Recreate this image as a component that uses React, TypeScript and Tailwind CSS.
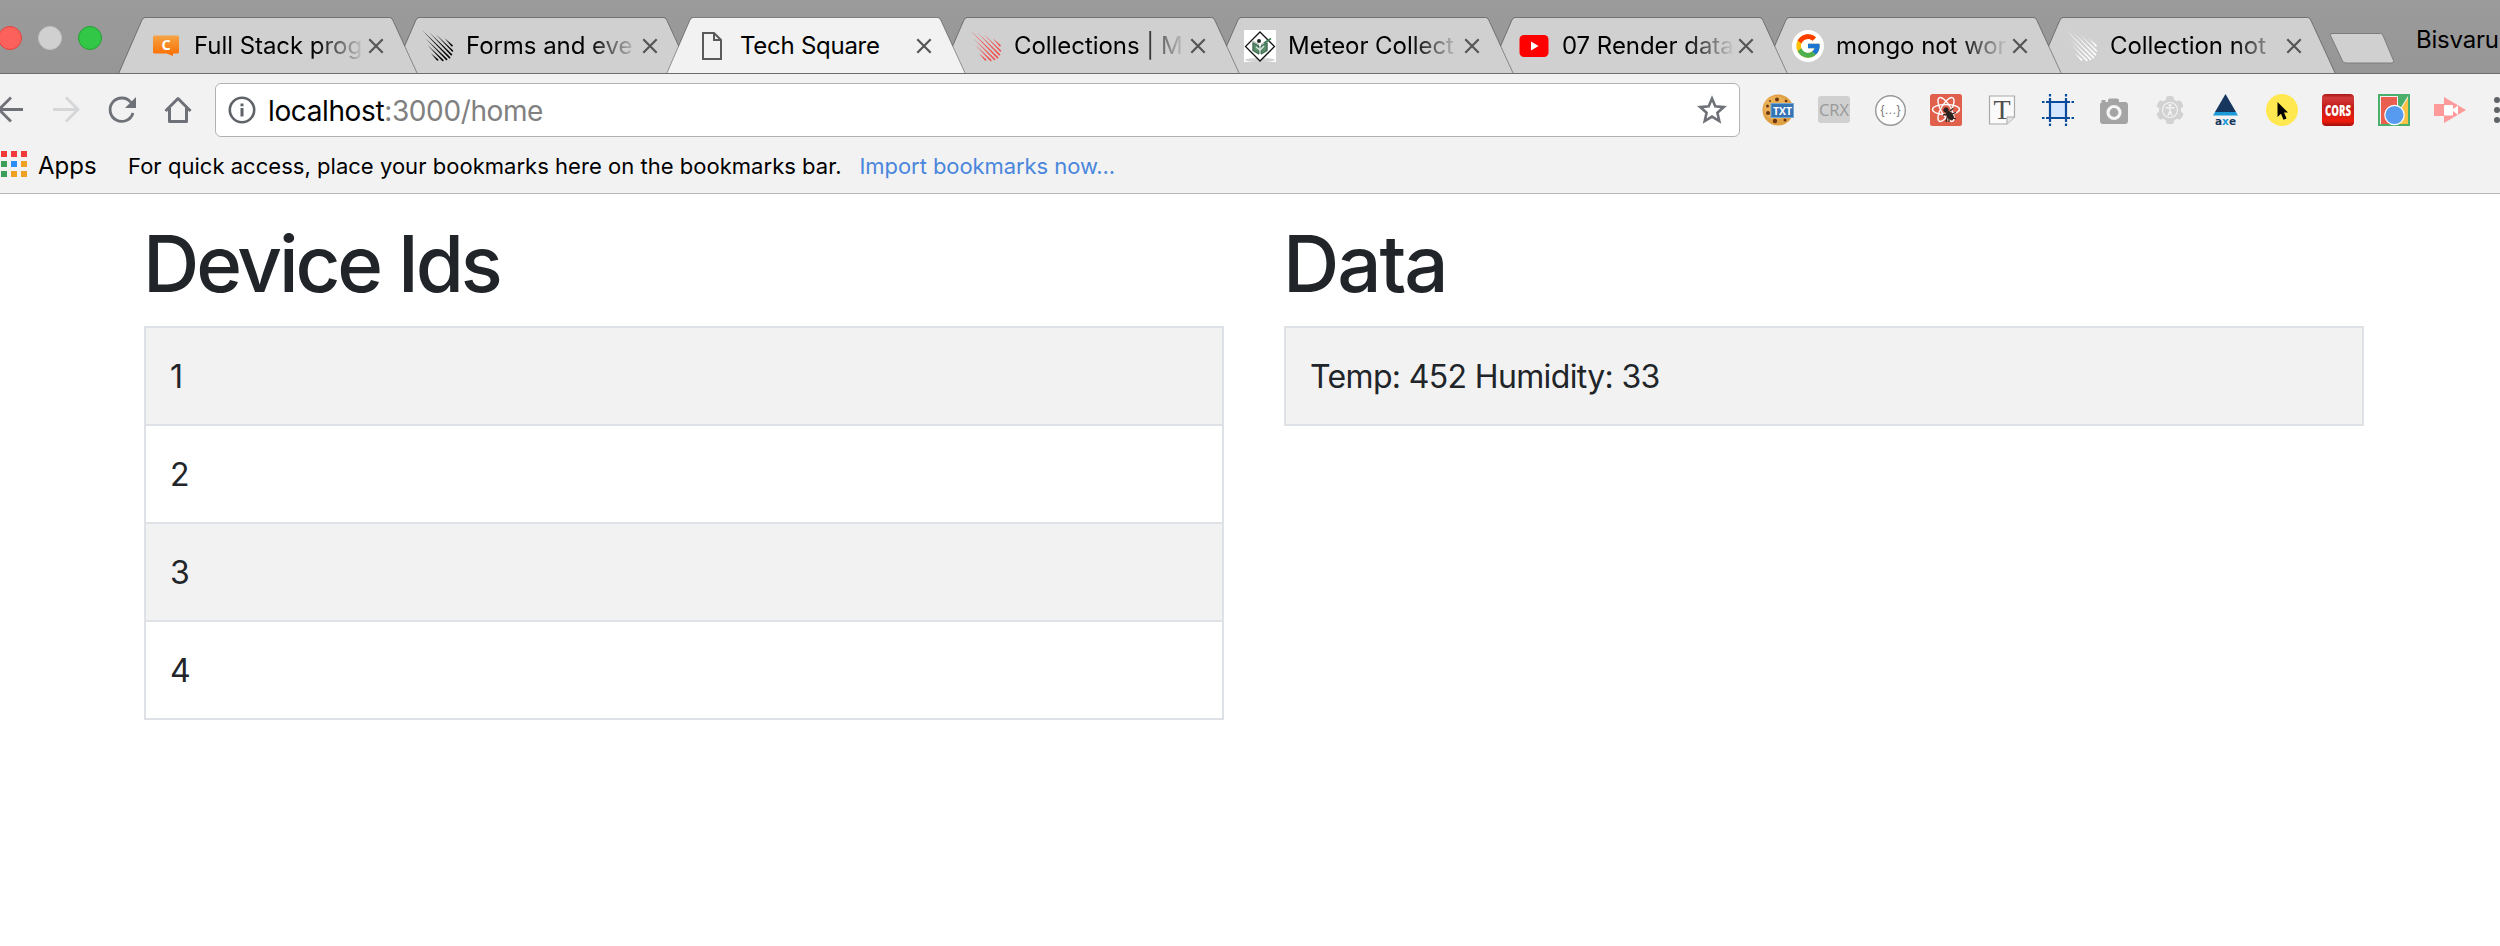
import type { ReactNode } from "react";
import { FcGoogle } from "react-icons/fc";

type TabInfo = { title: string; icon: ReactNode; active?: boolean; layer: string; nudge: string };

// Each stripe: sideways offset from the diagonal, start and end along it.
const meteorStripes = [
  [-7.2, 16, 23], [-4.8, 10, 25.8], [-2.4, 6, 27.2], [0, 0, 27.8],
  [2.4, 5, 27.2], [4.8, 9, 25.8], [7.2, 15.5, 23],
];

function Meteor({ color }: { color: string }) {
  return (
    <svg viewBox="0 0 32 32" className="size-8" fill={color}>
      {meteorStripes.map(([o, s, e]) => (
        <path key={o} d={`M${s + o} ${s - o}L${e + o + 0.6} ${e - o - 0.6}Q${e + o + 0.8} ${e - o + 0.8} ${e + o - 0.6} ${e - o + 0.6}Z`} />
      ))}
    </svg>
  );
}

const CodeChat = () => (
  <svg viewBox="0 0 32 32" className="size-8">
    <defs>
      <linearGradient id="chat" x1="0" x2="0" y1="0" y2="1">
        <stop offset="0" stopColor="#f5a445" />
        <stop offset="1" stopColor="#fa6c00" />
      </linearGradient>
    </defs>
    <path d="M6.500 5.500H29.500Q31 5.500 31 7V22Q31 23.500 29.500 23.500H25V26L18.500 23.500H6.500Q5 23.500 5 22V7Q5 5.500 6.500 5.500Z" fill="url(#chat)" />
    <text x="18" y="19.500" textAnchor="middle" fontFamily="Open Sans" fontWeight="700" fontSize="14.500" fill="#fff">C</text>
  </svg>
);

const PageIcon = () => (
  <svg viewBox="0 0 32 32" className="size-8" fill="none" stroke="#5a5a5a" strokeWidth="2">
    <path d="M7 3H18L25 10V29H7Z" />
    <path d="M18 3V10H25" />
  </svg>
);

const Geek = () => (
  <svg viewBox="0 0 32 32" className="size-8">
    <rect width="32" height="32" fill="#fff" />
    <ellipse cx="16" cy="30" rx="15" ry="2" fill="#d4d4d4" />
    <path d="M16 2L30.500 16.500L16 31L1.500 16.500Z" fill="#fff" stroke="#151515" strokeWidth="1.300" />
    <path d="M8 10L15 14V25L8 21ZM24 10L17 14V25L24 21Z" fill="#b5bab8" />
    <path d="M9 13L15 16V24L9 20.500ZM23 13L17 16V24L23 20.500Z" fill="#5b8f6c" stroke="#24593a" strokeWidth="0.800" />
    <path d="M20 13L27 8.500" stroke="#3c7d52" strokeWidth="1.500" />
    <circle cx="15" cy="11" r="2" fill="#1e2a22" />
    <path d="M12 17L16 20L20 16" stroke="#dfe8e2" strokeWidth="1.500" fill="none" />
  </svg>
);

const Video = () => (
  <svg viewBox="0 0 32 32" className="size-8">
    <rect x="1.500" y="5" width="29" height="22" rx="4.500" fill="#f00" />
    <path d="M13 11.500L20.500 16L13 20.500Z" fill="#fff" />
  </svg>
);

const tabs: TabInfo[] = [
  { title: "Full Stack prog", icon: <CodeChat />, layer: "z-[8]", nudge: "pl-[14px]" },
  { title: "Forms and eve", icon: <Meteor color="#000" />, layer: "z-[7]", nudge: "pl-[12px]" },
  { title: "Tech Square", icon: <PageIcon />, active: true, layer: "z-[9]", nudge: "pl-[12px]" },
  { title: "Collections | M", icon: <Meteor color="#f04f4f" />, layer: "z-[6]", nudge: "pl-[12px]" },
  { title: "Meteor Collect", icon: <Geek />, layer: "z-[5]", nudge: "pl-[12px]" },
  { title: "07 Render data", icon: <Video />, layer: "z-[4]", nudge: "pl-[12px]" },
  { title: "mongo not wor", icon: <div className="flex size-8 items-center justify-center rounded-full bg-white"><FcGoogle size={28} /></div>, layer: "z-[3]", nudge: "pl-[12px]" },
  { title: "Collection not", icon: <Meteor color="#fff" />, layer: "z-[2]", nudge: "pl-[12px]" },
];

function Tab({ tab }: { tab: TabInfo }) {
  return (
    <div className={`relative -mr-[26px] grid h-[57px] w-[300px] shrink-0 ${tab.layer}`}>
      <svg viewBox="0 0 300 57" className="col-start-1 row-start-1 h-[57px] w-[300px]">
        <path d="M0.500 57L24 3Q25.200 0.500 27.500 0.500H271.500Q273.500 0.500 274.700 3L299.500 57" fill={tab.active ? "#f2f2f2" : "#d0d0d0"} stroke="rgba(0,0,0,0.36)" />
        {!tab.active && <rect y="56" width="300" height="1" fill="#6d6d6d" />}
      </svg>
      <div className="col-start-1 row-start-1 flex h-[57px] items-center pl-[30px]">
        {tab.icon}
        <div className={`w-[185px] whitespace-nowrap text-2xl text-black ${tab.active ? "tracking-[-0.27px]" : "tracking-[-0.05px] mask-r-from-[73%] mask-r-to-[100%]"} ${tab.nudge}`}>{tab.title}</div>
        <svg viewBox="0 0 16 16" className="ml-[3px] size-4" stroke="#555" strokeWidth="2.200">
          <path d="M1.300 1.300L14.700 14.700M14.700 1.300L1.300 14.700" />
        </svg>
      </div>
    </div>
  );
}

const gearTeeth = [0, 60, 120, 180, 240, 300];

const extensions: ReactNode[] = [
  <>
    <circle cx="16" cy="16" r="15.500" fill="#e0a044" />
    <circle cx="14" cy="14" r="12" fill="#ebb056" />
    <g fill="#6b3510">
      <circle cx="15" cy="5.500" r="2" /><circle cx="5.500" cy="12" r="1.500" /><circle cx="6" cy="19" r="2" />
      <circle cx="13" cy="27" r="2.200" /><circle cx="23" cy="26" r="1.500" /><circle cx="24" cy="7" r="1.300" /><circle cx="8" cy="7" r="1" />
    </g>
    <rect x="9" y="9.500" width="22.500" height="14" fill="#3474b5" stroke="#77a7d4" />
    <text x="20.500" y="20.500" textAnchor="middle" fontFamily="Open Sans" fontWeight="700" fontSize="11" textLength="19" lengthAdjust="spacingAndGlyphs" fill="#fff">TXT</text>
  </>,
  <>
    <rect y="2" width="32" height="27" rx="3" fill="#d0d0d0" />
    <text x="16" y="22" textAnchor="middle" fontFamily="Open Sans" fontSize="17" textLength="30" lengthAdjust="spacingAndGlyphs" fill="#999">CRX</text>
  </>,
  <>
    <circle cx="16.500" cy="16.500" r="14.800" fill="#fff" stroke="#979797" strokeWidth="1.400" />
    <text x="16.500" y="20" textAnchor="middle" fontFamily="Liberation Sans" fontSize="12" textLength="20" fill="#777">{"{...}"}</text>
  </>,
  <>
    <rect width="32" height="32" rx="2.500" fill="#e0604c" />
    <g fill="none" stroke="#fff" strokeWidth="1.400">
      <ellipse cx="16" cy="15.500" rx="13.500" ry="5" />
      <ellipse cx="16" cy="15.500" rx="13.500" ry="5" transform="rotate(60 16 15.500)" />
      <ellipse cx="16" cy="15.500" rx="13.500" ry="5" transform="rotate(120 16 15.500)" />
    </g>
    <g fill="#2b2320" stroke="#2b2320">
      <circle cx="16" cy="16" r="2.200" />
      <ellipse cx="20" cy="21.500" rx="2.500" ry="4.500" transform="rotate(-35 20 21.500)" />
      <path d="M13 21L18 20L16 28M20 17L23 14.500M22 20L26 18.500M19 24L19 28M23 24L26 25" fill="none" strokeWidth="1.300" />
    </g>
  </>,
  <>
    <path d="M3.500 2H28.500V23L21 30H3.500Z" fill="#fafafa" stroke="#aaa" strokeWidth="1.200" />
    <path d="M28.500 23H21V30" fill="#e5e5e5" stroke="#aaa" />
    <text x="16" y="24.500" textAnchor="middle" fontFamily="Liberation Serif" fontSize="28" fill="#505050">T</text>
  </>,
  <>
    <rect x="8" y="8" width="16" height="16" fill="#d4e6ff" />
    <path d="M4 8H28M4 24H28M8 4V28M24 4V28" stroke="#084a9b" strokeWidth="2.200" />
    <path d="M0 8H2.500M29.500 8H32M0 24H2.500M29.500 24H32M8 0V2.500M8 29.500V32M24 0V2.500M24 29.500V32" stroke="#084a9b" strokeWidth="2.200" />
  </>,
  <>
    <path d="M12 4.500H19Q21 4.500 21 6.500V8H27Q30 8 30 11V27Q30 30 27 30H5Q2 30 2 27V11Q2 8 5 8H10V6.500Q10 4.500 12 4.500Z" fill="#a4a4a4" />
    <rect x="3.500" y="6" width="4" height="2" fill="#a4a4a4" />
    <circle cx="16" cy="18.500" r="6" fill="#a4a4a4" stroke="#f5f5f5" strokeWidth="3.200" />
  </>,
  <>
    <g fill="#d2d2d2">
      <circle cx="16" cy="16" r="11" />
      {gearTeeth.map((a) => <path key={a} d="M12.500 2.500Q16 1.500 19.500 2.500L20.500 8H11.500Z" transform={`rotate(${a} 16 16)`} />)}
    </g>
    <circle cx="16" cy="16" r="7.500" fill="none" stroke="#f4f4f4" strokeWidth="1.100" />
    <circle cx="16" cy="11.300" r="1.400" fill="#f4f4f4" />
    <path d="M11.500 13.800H20.500M16 13V17L14 21.500M16 17L18 21.500" stroke="#f4f4f4" strokeWidth="1.500" fill="none" />
  </>,
  <>
    <path d="M15.500 0L26 18H5Z" fill="#17365d" />
    <path d="M5 18H26L28 21.500H3Z" fill="#1a9ad6" />
    <text x="15.500" y="31" textAnchor="middle" fontFamily="DejaVu Sans" fontWeight="700" fontSize="10.500" fill="#17365d">a<tspan fill="#1a9ad6">x</tspan>e</text>
  </>,
  <>
    <circle cx="16" cy="16" r="16" fill="#ffe850" />
    <path d="M11.500 8L22 18.500H18L20.500 24.500L17.500 25.800L15 19.800L11.500 23Z" fill="#000" />
  </>,
  <>
    <defs>
      <linearGradient id="cors" x1="0" x2="0" y1="0" y2="1">
        <stop offset="0" stopColor="#a81414" /><stop offset="0.120" stopColor="#d23a3a" /><stop offset="0.400" stopColor="#c31d1a" />
        <stop offset="0.850" stopColor="#ee1c0c" /><stop offset="1" stopColor="#a01010" />
      </linearGradient>
    </defs>
    <rect width="32" height="32" rx="4" fill="url(#cors)" />
    <text x="16" y="21.500" textAnchor="middle" fontFamily="Open Sans" fontWeight="800" fontSize="15.500" textLength="26" lengthAdjust="spacingAndGlyphs" fill="#fff">CORS</text>
  </>,
  <>
    <rect width="32" height="32" fill="#4aaf6a" />
    <rect x="2" y="2" width="28" height="28" fill="#f1f1f1" />
    <path d="M3 3H19V30H3Z" fill="#ea5e50" />
    <path d="M20 2H30L20 18Z" fill="#4aaf6a" />
    <path d="M30 4V30H21V18Z" fill="#fbc344" />
    <circle cx="16.500" cy="21" r="9.700" fill="#569bf0" stroke="#fff" strokeWidth="1.200" />
  </>,
  <>
    <path d="M0 10H10V22H0ZM10 3L32 16L10 29Z" fill="#ff9a9a" />
    <rect x="10" y="11" width="9" height="10.500" rx="1" fill="#fff" />
    <path d="M18 16L24 11.500V21Z" fill="#fff" />
  </>,
];

const appDots = ["#f23a3a", "#f23a3a", "#f23a3a", "#3a9f5a", "#2b8df5", "#efa124", "#3a9f5a", "#efa124", "#efa124"];

function TableBox({ title, rows, heading }: { title: string; rows: string[]; heading: string }) {
  return (
    <section className="w-[1080px]">
      <h1 className={`h-[96px] text-[78px] leading-[96px] font-medium ${heading}`}>{title}</h1>
      <div className="mt-[14px] border-t-2 border-[#dee2e6]">
        {rows.map((r, i) => (
          <div key={r} className={`flex h-[98px] items-center border-x-2 border-b-2 border-[#dee2e6] px-6 pt-0.5 text-[32px] tracking-[-0.65px] ${i % 2 === 0 ? "bg-[#f2f2f2]" : "bg-white"}`}>{r}</div>
        ))}
      </div>
    </section>
  );
}

export default function App() {
  return (
    <div className="h-[946px] w-[2500px] overflow-hidden bg-white font-['Inter','Liberation_Sans',sans-serif] text-[#212529]">
      <header className="flex h-[74px] items-end overflow-hidden border-b border-[#6d6d6d] bg-linear-to-b from-[#9b9b9b] to-[#969696]">
        <div className="-ml-0.5 flex w-[120px] shrink-0 gap-4 self-start pt-[26px]">
          <div className="size-6 shrink-0 rounded-full border border-[#e2443f] bg-[#fd615c]" />
          <div className="size-6 shrink-0 rounded-full border border-[#c2c2c2] bg-[#d0d0d0]" />
          <div className="size-6 shrink-0 rounded-full border border-[#25a035] bg-[#33c748]" />
        </div>
        <div className="-mb-px flex shrink-0">
          {tabs.map((t) => <Tab key={t.title} tab={t} />)}
        </div>
        <svg viewBox="0 0 66 32" className="mb-[9px] ml-[19px] h-8 w-[66px] shrink-0">
          <path d="M3 1.500H51.500Q53 1.500 54 3.500L64.500 28.500Q65 31 63 31H17Q14.500 31 13.500 29L1.500 3.500Q1 1.500 3 1.500Z" fill="#d0d0d0" stroke="#7c7c7c" />
        </svg>
        <div className="ml-[21px] self-start pt-[24px] text-2xl leading-8 tracking-[-0.2px] text-black">Bisvaru</div>
      </header>

      <nav className="flex h-[72px] items-center bg-[#f2f2f2]">
        <div className="-ml-1.5 flex gap-6">
          <svg viewBox="0 0 32 32" className="size-8" fill="none" stroke="#6e7278" strokeWidth="2.800"><path d="M29 15.500H4.500M17 3.500L5 15.500L17 27.500" /></svg>
          <svg viewBox="0 0 32 32" className="size-8" fill="none" stroke="#d5d6d8" strokeWidth="2.800"><path d="M3 15.500H27.500M16 3.500L28 15.500L16 27.500" /></svg>
          <svg viewBox="0 0 32 32" className="size-8" fill="none" stroke="#6e7278" strokeWidth="2.800"><path d="M27 19A11.700 11.700 0 1 1 25 8.500" /><path d="M30 3V14H19Z" fill="#6e7278" stroke="none" /></svg>
          <svg viewBox="0 0 32 32" className="size-8" fill="none" stroke="#6e7278" strokeWidth="3" strokeLinejoin="round"><path d="M3.500 17L16 4.500L28.500 17" /><path d="M7.500 14V27.500H24.500V14" /></svg>
        </div>
        <div className="ml-[21px] flex h-[54px] w-[1526px] items-center rounded-md border border-[#b2b2b2] bg-white">
          <svg viewBox="0 0 28 28" className="ml-3 size-7" fill="none" stroke="#5f6368" strokeWidth="2.600">
            <circle cx="14" cy="14" r="12.200" />
            <path d="M14 12V20.500" strokeWidth="3" /><path d="M14 7.500V10.300" strokeWidth="3" />
          </svg>
          <div className="ml-[12px] pt-px text-[28px] tracking-[-0.38px] text-black">localhost<span className="text-[#808080]">:3000/home</span></div>
          <svg viewBox="0 0 32 32" className="mr-[11px] ml-auto size-8" fill="none" stroke="#6e7278" strokeWidth="2.600">
            <path d="M16 4.500L19.300 12.300L27.800 13.100L21.400 18.700L23.300 27L16 22.600L8.700 27L10.600 18.700L4.200 13.100L12.700 12.300Z" />
          </svg>
        </div>
        <div className="ml-[22px] flex gap-6">
          {extensions.map((e, i) => <svg key={i} viewBox="0 0 32 32" className="size-8">{e}</svg>)}
        </div>
        <div className="ml-[28px] flex flex-col gap-1">
          <div className="size-1.5 rounded-full bg-[#5f6368]" />
          <div className="size-1.5 rounded-full bg-[#5f6368]" />
          <div className="size-1.5 rounded-full bg-[#5f6368]" />
        </div>
      </nav>

      <div className="flex h-[48px] items-start border-b border-[#b6b6b6] bg-[#f2f2f2] text-[22px] leading-8 text-black">
        <div className="mt-[5px] ml-px grid grid-cols-3 gap-1">
          {appDots.map((c, i) => <span key={i} className="size-1.5" style={{ backgroundColor: c }} />)}
        </div>
        <div className="ml-[11px] w-[90px] pt-[4px] text-2xl leading-8">Apps</div>
        <div className="pt-1 tracking-[0.03px]">For quick access, place your bookmarks here on the bookmarks bar.</div>
        <div className="ml-[18px] pt-1 tracking-[-0.07px] text-[#4a86dc]">Import bookmarks now...</div>
      </div>

      <main className="flex gap-[60px] pt-[22px] pl-[144px]">
        <TableBox title="Device Ids" rows={["1", "2", "3", "4"]} heading="-ml-px tracking-[-3.15px]" />
        <TableBox title="Data" rows={["Temp: 452 Humidity: 33"]} heading="-ml-px tracking-[-2.1px]" />
      </main>
    </div>
  );
}
